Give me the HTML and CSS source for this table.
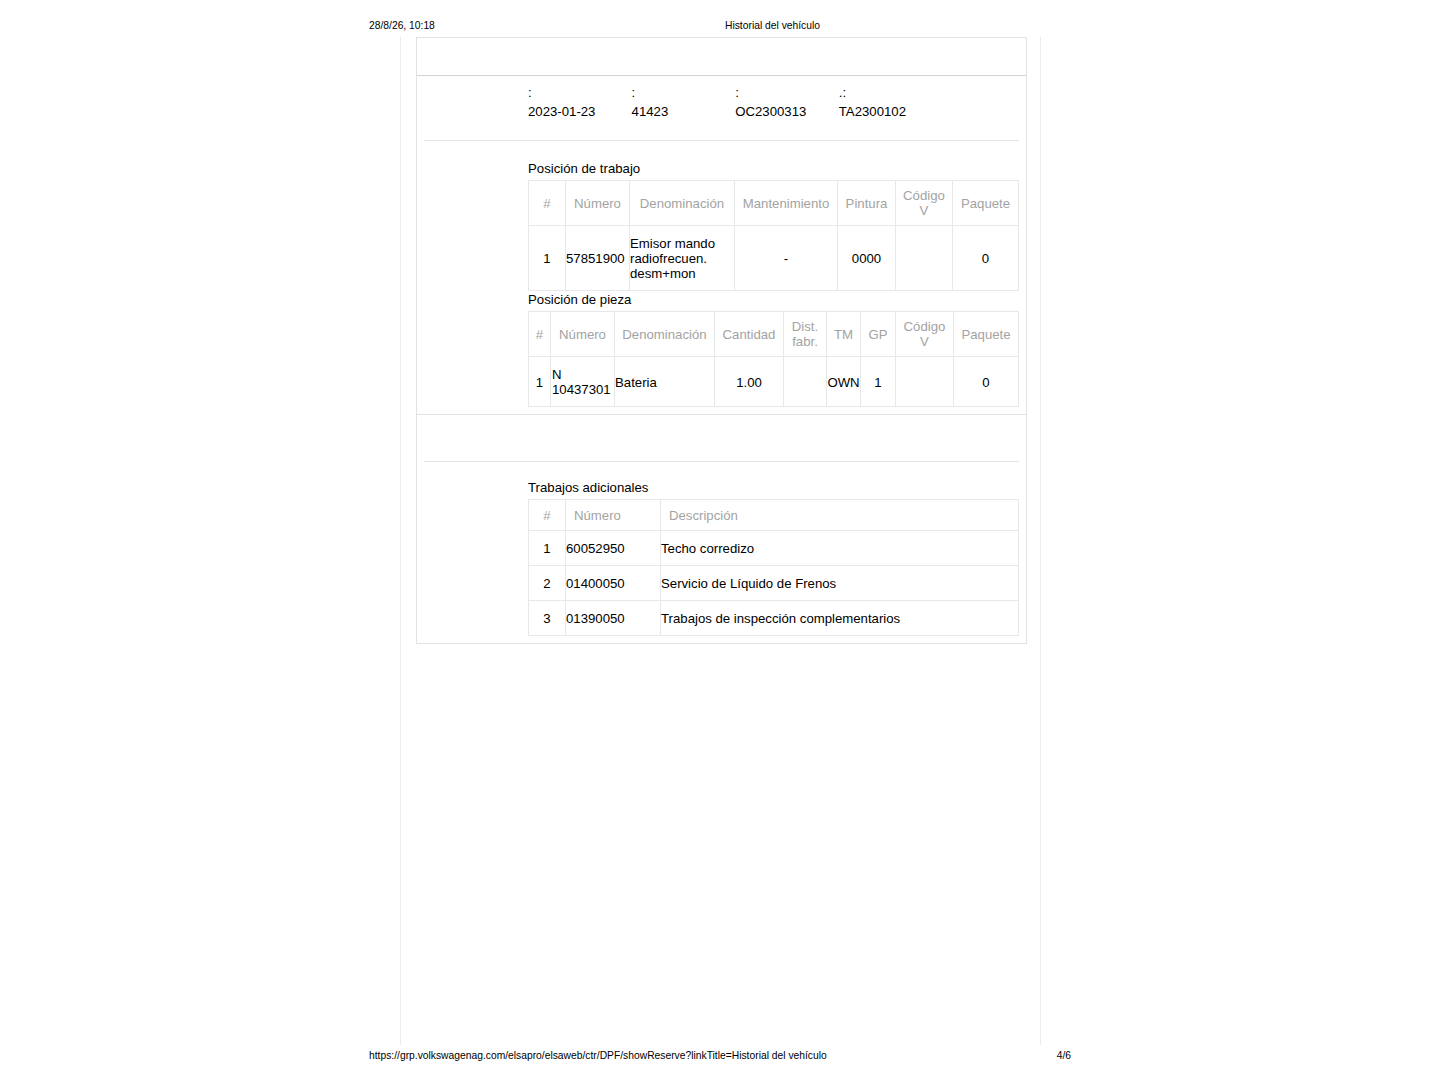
FILE: index.html
```html
<!DOCTYPE html>
<html lang="es">
<head>
<meta charset="utf-8">
<title>Historial del vehículo</title>
<link rel="stylesheet" href="styles.css">
</head>
<body>
<div class="page">
  <header class="print-head">
    <span class="print-date">28/8/26, 10:18</span>
    <span class="print-title">Historial del vehículo</span>
  </header>

  <main class="sheet">
    <div class="card">
      <div class="card-top"></div>

      <section class="block block-first">
        <div class="info">
          <div class="info-col"><div class="info-label">:</div><div class="info-value">2023-01-23</div></div>
          <div class="info-col"><div class="info-label">:</div><div class="info-value">41423</div></div>
          <div class="info-col"><div class="info-label">:</div><div class="info-value">OC2300313</div></div>
          <div class="info-col"><div class="info-label">.:</div><div class="info-value">TA2300102</div></div>
        </div>
        <div class="divider"></div>
        <div class="content">
          <h3 class="table-title">Posición de trabajo</h3>
          <table class="grid">
            <colgroup>
              <col class="w37"><col class="w64"><col class="w105"><col class="w103"><col class="w58"><col class="w57"><col class="w66">
            </colgroup>
            <thead>
              <tr>
                <th>#</th><th>Número</th><th>Denominación</th><th>Mantenimiento</th><th>Pintura</th><th>Código V</th><th>Paquete</th>
              </tr>
            </thead>
            <tbody>
              <tr>
                <td class="c">1</td>
                <td class="l">57851900</td>
                <td class="l">Emisor mando radiofrecuen. desm+mon</td>
                <td class="c">-</td>
                <td class="c">0000</td>
                <td class="c"></td>
                <td class="c">0</td>
              </tr>
            </tbody>
          </table>

          <h3 class="table-title">Posición de pieza</h3>
          <table class="grid">
            <colgroup>
              <col class="w22"><col class="w64"><col class="w100"><col class="w69"><col class="w43"><col class="w34"><col class="w35"><col class="w58"><col class="w65">
            </colgroup>
            <thead>
              <tr>
                <th>#</th><th>Número</th><th>Denominación</th><th>Cantidad</th><th>Dist. fabr.</th><th>TM</th><th>GP</th><th>Código V</th><th>Paquete</th>
              </tr>
            </thead>
            <tbody>
              <tr>
                <td class="c">1</td>
                <td class="l pad1">N 10437301</td>
                <td class="l">Bateria</td>
                <td class="c">1.00</td>
                <td class="c"></td>
                <td class="c">OWN</td>
                <td class="c">1</td>
                <td class="c"></td>
                <td class="c">0</td>
              </tr>
            </tbody>
          </table>
        </div>
      </section>

      <section class="block">
        <div class="info info-empty"></div>
        <div class="divider"></div>
        <div class="content content-tight">
          <h3 class="table-title">Trabajos adicionales</h3>
          <table class="grid grid-left">
            <colgroup>
              <col class="w37"><col class="w95"><col class="w358">
            </colgroup>
            <thead>
              <tr><th class="hc">#</th><th>Número</th><th>Descripción</th></tr>
            </thead>
            <tbody>
              <tr><td class="c">1</td><td class="l">60052950</td><td class="l">Techo corredizo</td></tr>
              <tr><td class="c">2</td><td class="l">01400050</td><td class="l">Servicio de Líquido de Frenos</td></tr>
              <tr><td class="c">3</td><td class="l">01390050</td><td class="l">Trabajos de inspección complementarios</td></tr>
            </tbody>
          </table>
        </div>
      </section>
    </div>
  </main>

  <footer class="print-foot">
    <span>https://grp.volkswagenag.com/elsapro/elsaweb/ctr/DPF/showReserve?linkTitle=Historial del vehículo</span>
    <span>4/6</span>
  </footer>
</div>
</body>
</html>
```

FILE: styles.css
```css
* { box-sizing: border-box; }

html, body {
  margin: 0;
  padding: 0;
  background: #fff;
}

body {
  font-family: "Liberation Sans", Arial, sans-serif;
  color: #000;
}

.page {
  width: 702px;
  margin: 0 auto;
}

/* print header / footer */
.print-head {
  display: grid;
  grid-template-columns: 356px 1fr;
  height: 37px;
  padding-top: 20px;
  font-size: 10.3px;
  line-height: 12px;
  color: #000;
}

.print-foot {
  display: flex;
  justify-content: space-between;
  padding-top: 5px;
  font-size: 10.3px;
  line-height: 12px;
  color: #000;
}

/* sheet frame */
.sheet {
  margin-left: 31px;
  width: 641px;
  height: 1008px;
  border-left: 1px solid #ececec;
  border-right: 1px solid #ececec;
}

.card {
  margin-left: 15px;
  width: 611px;
  border: 1px solid #e2e2e2;
  font-size: 13.2px;
}

.card-top {
  height: 38px;
  border-bottom: 1px solid #d2d2d2;
}

.block {
  padding: 0 7px 7px;
}

.block-first {
  border-bottom: 1px solid #e2e2e2;
}

.info {
  display: grid;
  grid-template-columns: repeat(4, 103.6px);
  padding: 7px 0 19px 104px;
  line-height: 19px;
}

.info-empty {
  height: 46px;
  padding: 0;
}

.divider {
  height: 1px;
  background: #e4e4e4;
}

.content {
  margin: 19px 0 0 104px;
}

.content-tight {
  margin-top: 17px;
}

.table-title {
  margin: 0 0 4px;
  padding-top: 1px;
  font-size: 13.2px;
  font-weight: normal;
  line-height: 15px;
}

.grid {
  width: 100%;
  table-layout: fixed;
  border-collapse: collapse;
  font-size: 13.2px;
  line-height: 15px;
}

.grid th,
.grid td {
  border: 1px solid #e8e8e8;
}

.grid th {
  padding: 7px 4px;
  font-weight: normal;
  color: #a3a3a3;
  text-align: center;
  vertical-align: middle;
}

.grid td {
  padding: 10px 0 9px;
  vertical-align: middle;
}

.grid td.pad1 {
  padding-left: 1px;
}

.grid-left th {
  text-align: left;
  padding: 8px 8px 7px;
}

.grid-left th.hc {
  text-align: center;
  padding-left: 4px;
  padding-right: 4px;
}

.c { text-align: center; }
.l { text-align: left; }

.w22 { width: 22px; }
.w34 { width: 34px; }
.w35 { width: 35px; }
.w37 { width: 37px; }
.w43 { width: 43px; }
.w57 { width: 57px; }
.w58 { width: 58px; }
.w64 { width: 64px; }
.w65 { width: 65px; }
.w66 { width: 66px; }
.w69 { width: 69px; }
.w95 { width: 95px; }
.w100 { width: 100px; }
.w103 { width: 103px; }
.w105 { width: 105px; }
.w358 { width: 358px; }
```
